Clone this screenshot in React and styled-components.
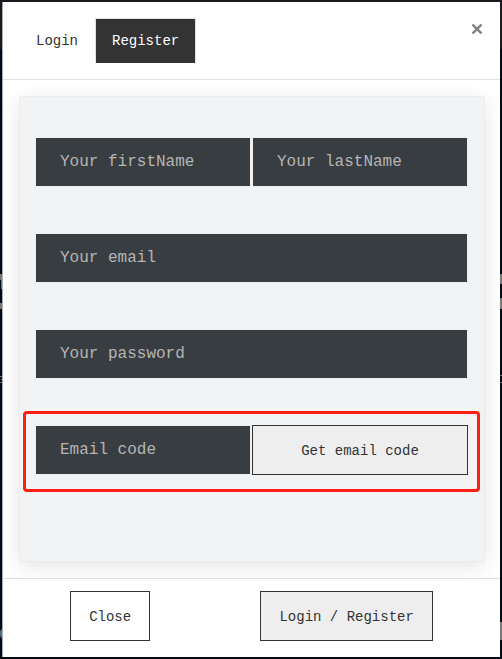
import React from "react";
import styled, { createGlobalStyle } from "styled-components";

const GlobalStyle = createGlobalStyle`
  *, *::before, *::after { box-sizing: border-box; }
  body { margin: 0; background: #000b16; }
  button, input { font-family: "Liberation Mono", "Courier New", monospace; border-radius: 0; }
`;

const Backdrop = styled.div`
  position: relative;
  min-height: 100vh;
  padding: 2px;
  background: linear-gradient(#1a1a1e 49px, #000b16 49px);
  font-family: "Liberation Mono", "Courier New", monospace;
  font-size: 14px;
  line-height: 20px;
`;

const PageEdge = styled.svg`
  position: absolute;
  top: 0;
  ${(p) => (p.$side === "left" ? "left: 0;" : "right: 0;")}
`;

const Dialog = styled.div`
  position: relative;
  background: #fff;
  border-left: 1px solid #a9acb0;
`;

const Header = styled.header`
  display: flex;
  justify-content: space-between;
  align-items: flex-start;
  padding: 16px;
  border-bottom: 1px solid #dee2e6;
`;

const Tabs = styled.div`
  display: flex;
`;

const Tab = styled.button`
  height: 45px;
  padding: 0 16px;
  border: 1px solid ${(p) => (p.$active ? "#dee2e6" : "transparent")};
  border-bottom: 0;
  background: ${(p) => (p.$active ? "#333" : "transparent")};
  color: ${(p) => (p.$active ? "#fff" : "#333")};
  font-size: 14px;
  line-height: 20px;
`;

const CloseIcon = styled.button`
  display: flex;
  padding: 6px 2px;
  border: 0;
  background: transparent;
  color: #808080;
`;

const Body = styled.main`
  padding: 16px 15px 16px 16px;
  overflow: hidden;
`;

const Panel = styled.form`
  display: flex;
  flex-direction: column;
  gap: 46px;
  padding: 40px 16px 86px 15px;
  background: #f1f3f5;
  border: 1px solid #ececec;
  box-shadow: 0 5px 20px rgba(0, 0, 0, 0.1);
`;

const Row = styled.div`
  position: relative;
  display: grid;
  grid-template-columns: ${(p) => (p.$split ? "1fr 1fr" : "1fr")};
  gap: 1px;
`;

const Highlight = styled.div`
  position: absolute;
  inset: -14px -12px -17px -12px;
  border: 3px solid #ff1e12;
  border-radius: 4px;
  pointer-events: none;
`;

const Field = styled.input`
  width: 100%;
  min-width: 0;
  height: 50px;
  padding: 0 24px;
  background: #383d41;
  background-clip: padding-box;
  border: 1px solid #eeeeee;
  color: #ccc;
  font-size: 16px;

  &::placeholder {
    color: #b5b5b5;
    opacity: 1;
  }
`;

const Button = styled.button`
  height: 50px;
  padding: 2px 18px 0;
  border: 1px solid #333;
  background: ${(p) => (p.$filled ? "#eee" : "#fff")};
  color: #333;
  font-size: 14px;
  line-height: 20px;
`;

const Footer = styled.footer`
  display: flex;
  justify-content: space-around;
  padding: 12px 12px 16px;
  border-top: 1px solid #dedfe6;
`;

export default function App() {
  return (
    <>
      <GlobalStyle />
      <Backdrop>
        <PageEdge $side="left" width="2" height="659" aria-hidden="true">
          <path d="M0 274h2v15h-1v-9h-1zM0 303h2v6h-2z" fill="#77777a" />
          <path d="M0 376h2v1h-2zM1 379h1v1h-1zM0 382h2v1h-2z" fill="#77777a" />
          <path d="M2 629v9h-1l-1-3v-4z" fill="#4d7188" />
        </PageEdge>
        <PageEdge $side="right" width="2" height="659" aria-hidden="true">
          <path d="M0 274h2v10h-2zM0 298h2v11h-2zM0 622h2v18h-2z" fill="#77777a" />
          <path d="M0 375h2v1h-2zM0 382h2v1h-2z" fill="#77777a" />
        </PageEdge>
        <Dialog role="dialog" aria-label="Register">
          <Header>
            <Tabs role="tablist">
              <Tab type="button" role="tab" aria-selected="false">Login</Tab>
              <Tab type="button" role="tab" aria-selected="true" $active>Register</Tab>
            </Tabs>
            <CloseIcon type="button" aria-label="Close dialog">
              <svg width="10" height="10" viewBox="0 0 10 10" aria-hidden="true">
                <path d="M0.5 0.5L9.5 9.5M9.5 0.5L0.5 9.5" stroke="currentColor" strokeWidth="2.4" />
              </svg>
            </CloseIcon>
          </Header>
          <Body>
            <Panel id="register-form" onSubmit={(e) => e.preventDefault()}>
              <Row $split>
                <Field type="text" aria-label="First name" placeholder="Your firstName" />
                <Field type="text" aria-label="Last name" placeholder="Your lastName" />
              </Row>
              <Row>
                <Field type="email" aria-label="Email" placeholder="Your email" />
              </Row>
              <Row>
                <Field type="password" aria-label="Password" placeholder="Your password" />
              </Row>
              <Row $split>
                <Field type="text" aria-label="Email code" placeholder="Email code" />
                <Button type="button" $filled>Get email code</Button>
                <Highlight />
              </Row>
            </Panel>
          </Body>
          <Footer>
            <Button type="button">Close</Button>
            <Button type="submit" form="register-form" $filled>Login / Register</Button>
          </Footer>
        </Dialog>
      </Backdrop>
    </>
  );
}
